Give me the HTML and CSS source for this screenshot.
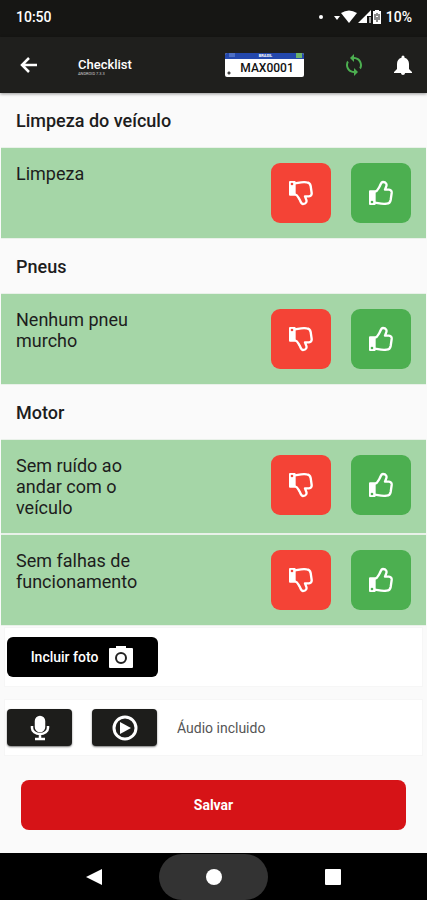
FILE: index.html
```html
<!DOCTYPE html>
<html lang="pt-BR">
<head>
<meta charset="utf-8">
<meta name="viewport" content="width=device-width, initial-scale=1">
<title>Checklist</title>
<link rel="stylesheet" href="styles.css">
</head>
<body>
<svg class="defs" aria-hidden="true">
  <symbol id="thumb" viewBox="0 0 72 76">
    <path fill="currentColor" fill-rule="evenodd" d="M3 30h14q3 0 3 3v38q0 3-3 3H3q-3 0-3-3V33q0-3 3-3zM9 61a4 4 0 1 0 0 8a4 4 0 1 0 0-8z"/>
    <path fill="none" stroke="currentColor" stroke-width="7" stroke-linejoin="round" d="M18 34c8-1 9-8 14-16c3-5 4-13 10-13c9 0 13 7 9 15l-3 8h12q9 1 8 10l-3 21q-2 11-12 11c-14 2-22-1-35-3"/>
  </symbol>
</svg>
<div class="status">
  <span>10:50</span>
  <div class="status-icons">
    <svg width="53" height="16" viewBox="0 0 53 16" fill="#fff" aria-hidden="true">
      <circle cx="2" cy="8" r="2"/>
      <path d="M15 7h6l-3 4z"/>
      <path d="M22 4q8-5 16 0l-8 10z"/>
      <path d="M39 14L52 1v6h-4v7z"/>
      <path d="M50 8h2v6h-2z" opacity=".6"/>
    </svg>
    <svg width="10" height="16" viewBox="0 0 10 16" aria-hidden="true">
      <path fill="#fff" d="M3 1h4v1h2v13H1V2h2z"/>
      <path fill="none" stroke="#161614" d="M5 4v3M3 5v6M7 5v6M5 8v5"/>
    </svg>
    <span>10%</span>
  </div>
</div>
<header class="appbar">
  <button class="icon-btn" aria-label="Voltar">
    <svg width="24" height="24" viewBox="0 0 24 24" fill="none" stroke="#fff" stroke-width="2.500"><path d="M20 12H5M12 5l-7 7 7 7"/></svg>
  </button>
  <div class="title"><h1>Checklist</h1><small>ANDROID 7.3.3</small></div>
  <div class="plate">
    <div class="plate-top"><i class="mark"></i><span>BRASIL</span><i class="flag"></i></div>
    <div class="plate-number">MAX0001</div>
  </div>
  <button class="icon-btn sync" aria-label="Sincronizar">
    <svg width="24" height="24" viewBox="0 0 24 24" fill="#4caf50"><path d="M12 4V1L8 5l4 4V6c3.300 0 6 2.700 6 6 0 1-.3 2-.7 2.800l1.500 1.500C19.500 15 20 13.600 20 12c0-4.400-3.600-8-8-8zm0 14c-3.300 0-6-2.700-6-6 0-1 .3-2 .7-2.800L5.200 7.700C4.500 9 4 10.400 4 12c0 4.400 3.600 8 8 8v3l4-4-4-4z"/></svg>
  </button>
  <button class="icon-btn" aria-label="Notificações">
    <svg width="24" height="24" viewBox="0 0 24 24" fill="#fff"><path d="M12 22c1.100 0 2-.9 2-2h-4c0 1.100.9 2 2 2zm6-6v-5c0-3.100-1.600-5.600-4.500-6.300V4a1.500 1.500 0 0 0-3 0v.7C7.600 5.400 6 7.900 6 11v5l-3 3v1h18v-1z"/></svg>
  </button>
</header>
<main>
  <h2>Limpeza do veículo</h2>
  <section class="item">
    <p>Limpeza</p>
    <button class="vote no" aria-label="Reprovar Limpeza"><svg><use href="#thumb"/></svg></button>
    <button class="vote yes" aria-label="Aprovar Limpeza"><svg><use href="#thumb"/></svg></button>
  </section>
  <h2>Pneus</h2>
  <section class="item">
    <p>Nenhum pneu murcho</p>
    <button class="vote no" aria-label="Reprovar Nenhum pneu murcho"><svg><use href="#thumb"/></svg></button>
    <button class="vote yes" aria-label="Aprovar Nenhum pneu murcho"><svg><use href="#thumb"/></svg></button>
  </section>
  <h2>Motor</h2>
  <section class="item">
    <p>Sem ruído ao andar com o veículo</p>
    <button class="vote no" aria-label="Reprovar Sem ruído"><svg><use href="#thumb"/></svg></button>
    <button class="vote yes" aria-label="Aprovar Sem ruído"><svg><use href="#thumb"/></svg></button>
  </section>
  <section class="item">
    <p>Sem falhas de funcionamento</p>
    <button class="vote no" aria-label="Reprovar Sem falhas"><svg><use href="#thumb"/></svg></button>
    <button class="vote yes" aria-label="Aprovar Sem falhas"><svg><use href="#thumb"/></svg></button>
  </section>
  <div class="card">
    <button class="photo">Incluir foto
      <svg width="26" height="24" viewBox="0 0 26 24" aria-hidden="true"><path fill="#fff" d="M2 3h6V1h10v2h6q1 0 1 1v18q0 1-1 1H2q-1 0-1-1V4q0-1 1-1z"/><circle cx="13" cy="13" r="5" fill="#fff" stroke="#222" stroke-width="2"/></svg>
    </button>
  </div>
  <div class="card audio">
    <button class="media" aria-label="Gravar áudio">
      <svg width="26" height="28" viewBox="0 0 26 28" fill="none" stroke="#fff" stroke-width="2.500"><rect x="9" y="3" width="8" height="14" rx="4" fill="#fff"/><path d="M5 12v2a8 6 0 0 0 16 0v-2M13 20v5M8 25h10"/></svg>
    </button>
    <button class="media" aria-label="Reproduzir áudio">
      <svg width="26" height="28" viewBox="0 0 26 28"><circle cx="13" cy="14" r="11" fill="none" stroke="#fff" stroke-width="3"/><path d="M8 8v12l11-6z" fill="#fff"/></svg>
    </button>
    <span>Áudio incluido</span>
  </div>
  <button class="save">Salvar</button>
</main>
<nav class="sysnav">
  <button aria-label="Voltar"><svg width="16" height="18" viewBox="0 0 16 18"><path fill="#fff" d="M16 1v16L0 9z"/></svg></button>
  <button class="home" aria-label="Início"><svg width="16" height="16" viewBox="0 0 16 16"><circle cx="8" cy="8" r="8" fill="#fff"/></svg></button>
  <button aria-label="Recentes"><svg width="16" height="16" viewBox="0 0 16 16"><rect width="16" height="16" rx="1" fill="#fff"/></svg></button>
</nav>
</body>
</html>
```
FILE: styles.css
```css
* { box-sizing: border-box; }
body {
  margin: 0;
  min-height: 100vh;
  display: flex;
  flex-direction: column;
  background: #fafafa;
  color: #1d1d1d;
  font-family: Roboto, "Liberation Sans", sans-serif;
}
button { border: 0; padding: 0; font-family: inherit; color: #fff; background: none; }
svg { display: block; flex: none; }
.defs { position: absolute; width: 0; height: 0; }
.status {
  height: 37px;
  padding: 0 15px 4px 16px;
  display: flex;
  align-items: center;
  justify-content: space-between;
  background: #161614;
  color: #fff;
  font-size: 14px;
  font-weight: 500;
}
.status-icons { display: flex; align-items: center; }
.status-icons span { margin-left: 4px; }
.appbar {
  height: 56px;
  padding: 0 12px 0 17px;
  display: flex;
  align-items: center;
  background: #1f1f1d;
  color: #fff;
  box-shadow: 0 1px 3px #0006;
}
.title { flex: 1; margin-left: 37px; }
.title h1 { margin: 4px 0 0; font-size: 13px; line-height: 14px; font-weight: 500; }
.title small { display: block; font-size: 4px; line-height: 4px; color: #ccc; }
.plate {
  width: 79px;
  height: 24px;
  border-radius: 2px;
  overflow: hidden;
  background: #fff;
  color: #111;
}
.plate-top {
  height: 6px;
  display: flex;
  justify-content: space-between;
  padding: 0 2px 0 4px;
  background: #2448ac;
  color: #fff;
  font-size: 4px;
  line-height: 6px;
  font-weight: 700;
}
.mark { width: 6px; height: 4px; background: #4d6fc4; }
.flag { width: 6px; height: 5px; background: #6db36a; }
.plate-number {
  padding-left: 5px;
  text-align: center;
  font-size: 12px;
  line-height: 18px;
  font-weight: 500;
  background: radial-gradient(circle at 4px 14px, #444 1px, transparent 2px);
}
.sync { margin: 0 25px 0 38px; }
main { flex: 1; padding: 0 1px; }
h2 { margin: 0; padding: 17px 15px 16px; font-size: 18px; line-height: 21px; font-weight: 500; }
.item {
  padding: 15px;
  display: flex;
  align-items: flex-start;
  border: 1px solid #e9f1e9;
  border-width: 1px 0;
  background: #a5d6a7;
}
.item p { width: 130px; margin: 0 auto 0 0; font-size: 18px; line-height: 21px; }
.vote {
  width: 60px;
  height: 60px;
  margin-left: 20px;
  display: flex;
  align-items: center;
  justify-content: center;
  border-radius: 9px;
}
.vote svg { width: 24px; height: 26px; }
.no { background: #f44336; }
.no svg { transform: scaleY(-1); }
.yes { background: #4caf50; }
.card { margin: 1px 3px 12px; padding: 9px 2px; border: 1px solid #f6f6f6; background: #fff; }
.photo {
  width: 151px;
  height: 40px;
  display: flex;
  align-items: center;
  justify-content: center;
  gap: 10px;
  border-radius: 6px;
  background: #000;
  font-size: 14px;
  font-weight: 500;
}
.audio { display: flex; align-items: center; gap: 20px; margin: 0 3px 24px; }
.audio span { color: #555; font-size: 14px; }
.media {
  width: 65px;
  height: 37px;
  display: flex;
  align-items: center;
  justify-content: center;
  border-radius: 4px;
  background: #1d1d1b;
  box-shadow: 0 1px 2px #0008;
}
.save {
  display: block;
  width: calc(100% - 40px);
  height: 50px;
  margin: 0 auto 20px;
  border-radius: 8px;
  background: #d61317;
  font-size: 14px;
  font-weight: 700;
}
.sysnav {
  height: 47px;
  display: flex;
  justify-content: center;
  background: #000;
}
.sysnav button { width: 130px; display: flex; align-items: center; justify-content: center; }
.sysnav .home { width: 109px; margin-top: 1px; border-radius: 23px; background: #333; }
```
